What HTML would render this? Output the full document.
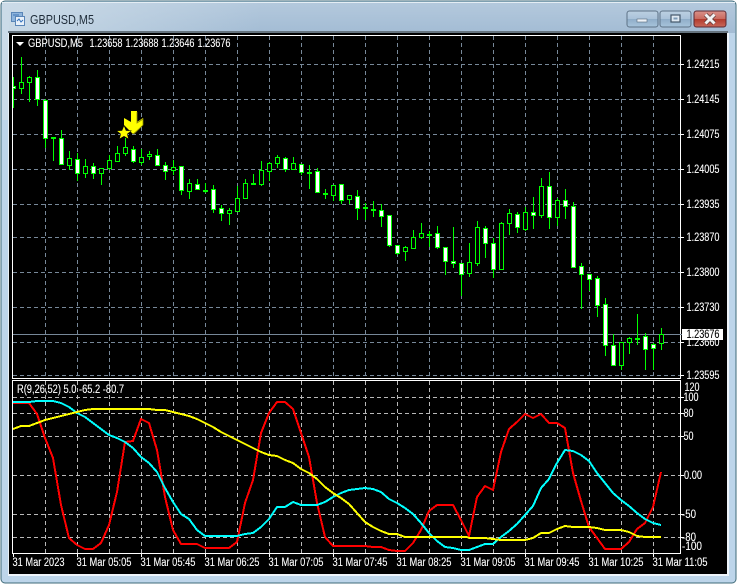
<!DOCTYPE html>
<html><head><meta charset="utf-8"><title>GBPUSD,M5</title>
<style>
html,body{margin:0;padding:0;width:738px;height:584px;overflow:hidden;background:#fff}
svg{position:absolute;left:0;top:0;display:block}
text{font-family:"Liberation Sans",sans-serif;font-size:11.5px;fill:#fff;stroke:#fff;stroke-width:.1px}
</style></head><body>
<svg width="738" height="584" viewBox="0 0 738 584" xmlns="http://www.w3.org/2000/svg">
<defs>
<linearGradient id="top" x1="0" y1="0" x2="0" y2="1"><stop offset="0" stop-color="#b4c9dd"/><stop offset="1" stop-color="#a3bcd4"/></linearGradient>
<linearGradient id="lft" x1="0" y1="0" x2="1" y2="0"><stop offset="0" stop-color="#d0dfea" stop-opacity=".85"/><stop offset="1" stop-color="#d0dfea" stop-opacity="0"/></linearGradient>
<linearGradient id="btn" x1="0" y1="0" x2="0" y2="1"><stop offset="0" stop-color="#bcd0e2"/><stop offset=".5" stop-color="#a9c2d9"/><stop offset=".5" stop-color="#8fadc8"/><stop offset="1" stop-color="#a8c4dc"/></linearGradient>
<linearGradient id="cls" x1="0" y1="0" x2="0" y2="1"><stop offset="0" stop-color="#d9928a"/><stop offset=".5" stop-color="#c96a5e"/><stop offset=".5" stop-color="#b23a2c"/><stop offset="1" stop-color="#c9685a"/></linearGradient>
<clipPath id="main"><rect x="13" y="36" width="667" height="342"/></clipPath>
<clipPath id="sub"><rect x="13" y="381" width="667" height="172"/></clipPath>
</defs>

<!-- window frame -->
<rect x="1" y="1" width="735" height="582" rx="4" fill="#bdd5ea" stroke="#3f6a78"/>
<rect x="2" y="2" width="733" height="31" fill="url(#top)"/>
<rect x="2" y="2" width="260" height="31" fill="url(#lft)"/>
<rect x="2" y="2" width="7" height="118" fill="#cbdbe8"/>
<path d="M2 2.5H735" stroke="#e4edf4" fill="none"/>
<rect x="8" y="31" width="720" height="2" fill="#66747f"/>
<rect x="8" y="33" width="1" height="542" fill="#e8f0f6"/>
<rect x="727" y="33" width="2" height="543" fill="#eef4fa"/>
<rect x="8" y="574" width="721" height="2" fill="#eef4fa"/>
<rect x="9" y="33" width="718" height="541" fill="#000"/>

<!-- title icon -->
<rect x="11.5" y="12.5" width="11" height="9" fill="#8db4dc" stroke="#5a86b8"/>
<rect x="15.5" y="16.5" width="9" height="9" fill="#e8f1fa" stroke="#5a86b8"/>
<path d="M13 15h6" stroke="#3f74b4" fill="none"/>
<path d="M17 21l2-2 2 3 2-2" stroke="#2f6fbc" fill="none"/>
<text x="30" y="24" textLength="64" lengthAdjust="spacingAndGlyphs" style="font-size:13px;fill:#1f2d3a;stroke:none">GBPUSD,M5</text>

<!-- buttons -->
<rect x="627" y="11" width="31" height="16" rx="2.5" fill="url(#btn)" stroke="#5d7286"/>
<rect x="637" y="19" width="10" height="3" fill="#eef3f8" stroke="#56687a" stroke-width=".6"/>
<rect x="660" y="11" width="31" height="16" rx="2.5" fill="url(#btn)" stroke="#5d7286"/>
<rect x="671" y="15" width="9" height="7" fill="#dfe9f2" stroke="#44576a" stroke-width="1.2"/>
<rect x="673.5" y="17.5" width="4" height="2" fill="#7d9ab5"/>
<rect x="694" y="11" width="32" height="16" rx="2.5" fill="url(#cls)" stroke="#5c2a33"/>
<path d="M705.5 14.5l9 9M714.5 14.5l-9 9" stroke="#5c3a3a" stroke-width="4.4" fill="none"/>
<path d="M705.5 14.5l9 9M714.5 14.5l-9 9" stroke="#f3f3f3" stroke-width="3" fill="none"/>

<!-- frames -->
<path d="M12.5 35.5H680.5V378.5H12.5ZM12.5 380.5H680.5V553.5H12.5Z" fill="none" stroke="#fff"/>

<!-- main grid -->
<path clip-path="url(#main)" d="M45.5 36V378M77.5 36V378M109.5 36V378M141.5 36V378M173.5 36V378M205.5 36V378M237.5 36V378M269.5 36V378M301.5 36V378M333.5 36V378M365.5 36V378M397.5 36V378M429.5 36V378M461.5 36V378M493.5 36V378M525.5 36V378M557.5 36V378M589.5 36V378M621.5 36V378M653.5 36V378M13 64.5H680M13 99.5H680M13 134.5H680M13 169.5H680M13 204.5H680M13 237.5H680M13 272.5H680M13 307.5H680M13 342.5H680M13 375.5H680" fill="none" stroke="#778899" stroke-dasharray="4 3"/>
<path d="M13 334.5H680" stroke="#778899" fill="none"/>

<g clip-path="url(#main)">
<!-- wicks -->
<path fill="none" stroke="#0f0" d="M13.5 77V108M21.5 57V94M29.5 76V102M37.5 70V106M45.5 99V148M53.5 137V161M61.5 130V165M69.5 151V170M77.5 153V181M85.5 159V178M93.5 163V179M101.5 168V185M109.5 155V170M117.5 146V161M125.5 138V156M133.5 146V163M141.5 149V165M149.5 151V160M157.5 149V166M165.5 162V180M173.5 160V175M181.5 166V195M189.5 179V199M197.5 179V189M205.5 183V193M213.5 185V213M221.5 205V221M229.5 208V225M237.5 186V211M245.5 179V199M253.5 174V185M261.5 161V186M269.5 162V181M277.5 155V168M285.5 157V172M293.5 157V169M301.5 164V175M309.5 165V189M317.5 168V193M325.5 189V199M333.5 185V201M341.5 184V204M349.5 195V204M357.5 190V220M365.5 203V220M373.5 201V217M381.5 204V227M389.5 215V247M397.5 245V255M405.5 246V261M413.5 230V249M421.5 223V239M429.5 231V247M437.5 226V249M445.5 247V275M453.5 227V268M461.5 263V296M469.5 243V277M477.5 221V266M485.5 226V258M493.5 238V278M501.5 222V269M509.5 209V235M517.5 212V233M525.5 207V231M533.5 197V229M541.5 178V218M549.5 172V229M557.5 198V226M565.5 189V219M573.5 202V267M581.5 263V309M589.5 274V291M597.5 276V317M605.5 298V356M613.5 334V365M621.5 342V370M629.5 337V354M637.5 314V345M645.5 333V370M653.5 343V370M661.5 328V350"/>
<!-- hollow bodies -->
<path fill="#000" stroke="#0f0" d="M19.5 82.5h4v6h-4zM27.5 77.5h4v5h-4zM51.5 137.5h4v1h-4zM67.5 158.5h4v7h-4zM83.5 166.5h4v7h-4zM99.5 168.5h4v5h-4zM107.5 160.5h4v8h-4zM115.5 153.5h4v8h-4zM123.5 147.5h4v6h-4zM139.5 157.5h4v5h-4zM147.5 154.5h4v2h-4zM171.5 167.5h4v3h-4zM187.5 183.5h4v8h-4zM203.5 190.5h4v1h-4zM227.5 210.5h4v3h-4zM235.5 198.5h4v13h-4zM243.5 183.5h4v15h-4zM251.5 183.5h4v1h-4zM259.5 170.5h4v14h-4zM267.5 163.5h4v8h-4zM275.5 157.5h4v6h-4zM291.5 163.5h4v6h-4zM307.5 172.5h4v1h-4zM323.5 193.5h4v1h-4zM331.5 185.5h4v10h-4zM347.5 195.5h4v4h-4zM363.5 207.5h4v1h-4zM371.5 209.5h4v1h-4zM403.5 247.5h4v4h-4zM411.5 237.5h4v11h-4zM419.5 233.5h4v4h-4zM427.5 234.5h4v1h-4zM467.5 262.5h4v11h-4zM475.5 227.5h4v36h-4zM499.5 223.5h4v46h-4zM507.5 213.5h4v10h-4zM523.5 212.5h4v17h-4zM539.5 186.5h4v29h-4zM555.5 200.5h4v17h-4zM619.5 342.5h4v23h-4zM627.5 338.5h4v4h-4zM635.5 338.5h4v1h-4zM659.5 334.5h4v9h-4z"/>
<!-- filled bodies -->
<path fill="#fff" stroke="#0f0" d="M11.5 86.5h4v2h-4zM35.5 77.5h4v22h-4zM43.5 100.5h4v38h-4zM59.5 138.5h4v26h-4zM75.5 159.5h4v14h-4zM91.5 166.5h4v7h-4zM131.5 149.5h4v12h-4zM155.5 155.5h4v10h-4zM163.5 165.5h4v6h-4zM179.5 166.5h4v24h-4zM195.5 184.5h4v5h-4zM211.5 189.5h4v20h-4zM219.5 208.5h4v5h-4zM283.5 158.5h4v11h-4zM299.5 164.5h4v8h-4zM315.5 171.5h4v21h-4zM339.5 184.5h4v16h-4zM355.5 196.5h4v12h-4zM379.5 210.5h4v6h-4zM387.5 215.5h4v30h-4zM395.5 245.5h4v8h-4zM435.5 233.5h4v14h-4zM443.5 247.5h4v14h-4zM451.5 261.5h4v2h-4zM459.5 263.5h4v11h-4zM483.5 228.5h4v15h-4zM491.5 243.5h4v26h-4zM515.5 214.5h4v13h-4zM531.5 212.5h4v3h-4zM547.5 186.5h4v31h-4zM563.5 200.5h4v6h-4zM571.5 206.5h4v61h-4zM579.5 266.5h4v8h-4zM587.5 274.5h4v5h-4zM595.5 278.5h4v27h-4zM603.5 304.5h4v41h-4zM611.5 345.5h4v20h-4zM643.5 336.5h4v13h-4zM651.5 344.5h4v4h-4z"/>
</g>

<!-- arrow and star -->
<path d="M131 111H137V122L143 118V125L133 134L124 125V118L131 122Z" fill="#ffff00"/>
<path d="M137 112V123L143 119V125L134 134" fill="none" stroke="#8a8a00" stroke-width=".8"/>
<path d="M124 125.500L126 130.500L131.500 130.700L127.200 134L128.700 139L124 136.200L119.300 139L120.800 134L116.500 130.700L122 130.500Z" fill="#ffff00" stroke="#000" stroke-width=".5"/>

<!-- header -->
<path d="M16 42H24L20 46Z" fill="#fff"/>
<text x="28" y="47" textLength="55" lengthAdjust="spacingAndGlyphs">GBPUSD,M5</text>
<text x="89.500" y="47" textLength="33" lengthAdjust="spacingAndGlyphs">1.23658</text>
<text x="125.500" y="47" textLength="33" lengthAdjust="spacingAndGlyphs">1.23688</text>
<text x="161.500" y="47" textLength="33" lengthAdjust="spacingAndGlyphs">1.23646</text>
<text x="197.500" y="47" textLength="33" lengthAdjust="spacingAndGlyphs">1.23676</text>

<!-- price axis -->
<path d="M681 64.500h3M681 99.500h3M681 134.500h3M681 169.500h3M681 204.500h3M681 237.500h3M681 272.500h3M681 307.500h3M681 342.500h3M681 375.500h3" stroke="#fff" fill="none"/>
<text x="686.500" y="68" textLength="33" lengthAdjust="spacingAndGlyphs">1.24215</text>
<text x="686.500" y="103" textLength="33" lengthAdjust="spacingAndGlyphs">1.24145</text>
<text x="686.500" y="138" textLength="33" lengthAdjust="spacingAndGlyphs">1.24075</text>
<text x="686.500" y="173" textLength="33" lengthAdjust="spacingAndGlyphs">1.24005</text>
<text x="686.500" y="208" textLength="33" lengthAdjust="spacingAndGlyphs">1.23935</text>
<text x="686.500" y="241" textLength="33" lengthAdjust="spacingAndGlyphs">1.23870</text>
<text x="686.500" y="276" textLength="33" lengthAdjust="spacingAndGlyphs">1.23800</text>
<text x="686.500" y="311" textLength="33" lengthAdjust="spacingAndGlyphs">1.23730</text>
<text x="686.500" y="346" textLength="33" lengthAdjust="spacingAndGlyphs">1.23660</text>
<text x="686.500" y="379" textLength="33" lengthAdjust="spacingAndGlyphs">1.23595</text>
<rect x="682" y="329" width="41" height="11" fill="#fff"/>
<path d="M680 334.500h2" stroke="#778899"/>
<text x="686.500" y="338" textLength="33" lengthAdjust="spacingAndGlyphs" style="fill:#000;stroke:#000">1.23676</text>

<!-- sub window -->
<path clip-path="url(#sub)" d="M45.500 381V553M77.500 381V553M109.500 381V553M141.500 381V553M173.500 381V553M205.500 381V553M237.500 381V553M269.500 381V553M301.500 381V553M333.500 381V553M365.500 381V553M397.500 381V553M429.500 381V553M461.500 381V553M493.500 381V553M525.500 381V553M557.500 381V553M589.500 381V553M621.500 381V553M653.500 381V553M13 397.500H680M13 413.500H680M13 436.500H680M13 475.500H680M13 514.500H680M13 537.500H680" fill="none" stroke="#b8b8b8" stroke-dasharray="4 3"/>
<g clip-path="url(#sub)" fill="none" stroke-width="2" shape-rendering="crispEdges">
<polyline stroke="#f00" points="13,403 29,403 37,414 45,438 53,458 61,505 69,538 77,545 85,549 93,549 101,543 109,525 117,492 125,442 133,441 141,419 149,423 157,450 165,497 173,530 181,544 189,544 197,544 205,548 213,548 229,548 237,542 245,503 253,480 261,433 269,413 277,402 285,402 293,409 301,433 309,457 317,503 325,537 333,546 365,546 373,547 381,547 389,550 397,551 405,551 413,543 421,530 429,511 437,505 453,505 461,520 469,536 477,497 485,486 493,490 501,452 509,429 517,422 525,414 533,418 541,414 549,423 557,423 565,428 573,473 581,501 589,527 597,538 605,549 621,549 629,542 637,529 645,523 653,507 661,472"/>
<polyline stroke="#0ff" points="13,402 29,402 37,401 53,401 61,403 69,407 77,413 85,417 93,423 101,429 109,435 117,438 125,442 133,448 141,457 149,463 157,472 165,488 173,502 181,514 189,519 197,530 205,536 213,536 237,536 245,534 253,533 261,527 269,519 277,507 285,507 293,502 301,505 317,505 325,502 333,497 341,493 349,490 357,489 365,488 373,489 381,492 389,499 397,503 405,508 413,514 421,523 429,533 437,541 445,547 453,548 461,550 469,550 477,547 485,544 493,544 501,537 509,531 517,524 525,515 533,506 541,488 549,479 557,463 565,450 573,451 581,455 589,461 597,473 605,483 613,493 621,500 629,506 637,513 645,519 653,523 661,525"/>
<polyline stroke="#ff0" points="13,429 21,426 29,426 37,423 45,420 53,418 61,416 69,414 77,412 85,410 93,409 149,409 157,410 165,410 173,412 181,414 189,416 197,419 205,423 213,427 221,432 229,436 237,440 245,444 261,452 269,455 277,456 285,460 293,463 301,469 309,473 317,479 325,487 333,493 341,498 349,504 357,513 365,522 373,527 381,531 389,534 397,534 405,537 467,537 469,538 485,538 493,539 501,540 525,540 533,538 541,533 549,533 557,529 565,526 573,527 589,527 597,528 605,530 621,530 629,532 637,536 645,537 661,537"/>
</g>
<path d="M13.500 553v4M77.500 553v4M141.500 553v4M205.500 553v4M269.500 553v4M333.500 553v4M397.500 553v4M461.500 553v4M525.500 553v4M589.500 553v4M653.500 553v4M681 397.500h3M681 413.500h3M681 436.500h3M681 475.500h3M681 514.500h3M681 537.500h3" stroke="#fff" fill="none"/>
<text x="17" y="393" textLength="107" lengthAdjust="spacingAndGlyphs">R(9,26,52) 5.0 -65.2 -80.7</text>

<text x="684.500" y="391" textLength="15" lengthAdjust="spacingAndGlyphs">120</text>
<text x="683.500" y="401" textLength="15" lengthAdjust="spacingAndGlyphs">100</text>
<text x="683.500" y="417" textLength="10" lengthAdjust="spacingAndGlyphs">80</text>
<text x="683.500" y="440" textLength="10" lengthAdjust="spacingAndGlyphs">50</text>
<text x="684" y="479" textLength="18" lengthAdjust="spacingAndGlyphs">0.00</text>
<text x="682" y="518" textLength="14" lengthAdjust="spacingAndGlyphs">-50</text>
<text x="682" y="541" textLength="14" lengthAdjust="spacingAndGlyphs">-80</text>
<text x="682" y="550" textLength="20" lengthAdjust="spacingAndGlyphs">-100</text>

<text x="12.500" y="566" textLength="52" lengthAdjust="spacingAndGlyphs">31 Mar 2023</text>
<text x="76.500" y="566" textLength="55" lengthAdjust="spacingAndGlyphs">31 Mar 05:05</text>
<text x="140.500" y="566" textLength="55" lengthAdjust="spacingAndGlyphs">31 Mar 05:45</text>
<text x="204.500" y="566" textLength="55" lengthAdjust="spacingAndGlyphs">31 Mar 06:25</text>
<text x="268.500" y="566" textLength="55" lengthAdjust="spacingAndGlyphs">31 Mar 07:05</text>
<text x="332.500" y="566" textLength="55" lengthAdjust="spacingAndGlyphs">31 Mar 07:45</text>
<text x="396.500" y="566" textLength="55" lengthAdjust="spacingAndGlyphs">31 Mar 08:25</text>
<text x="460.500" y="566" textLength="55" lengthAdjust="spacingAndGlyphs">31 Mar 09:05</text>
<text x="524.500" y="566" textLength="55" lengthAdjust="spacingAndGlyphs">31 Mar 09:45</text>
<text x="588.500" y="566" textLength="55" lengthAdjust="spacingAndGlyphs">31 Mar 10:25</text>
<text x="652.500" y="566" textLength="55" lengthAdjust="spacingAndGlyphs">31 Mar 11:05</text>
</svg>
</body></html>
